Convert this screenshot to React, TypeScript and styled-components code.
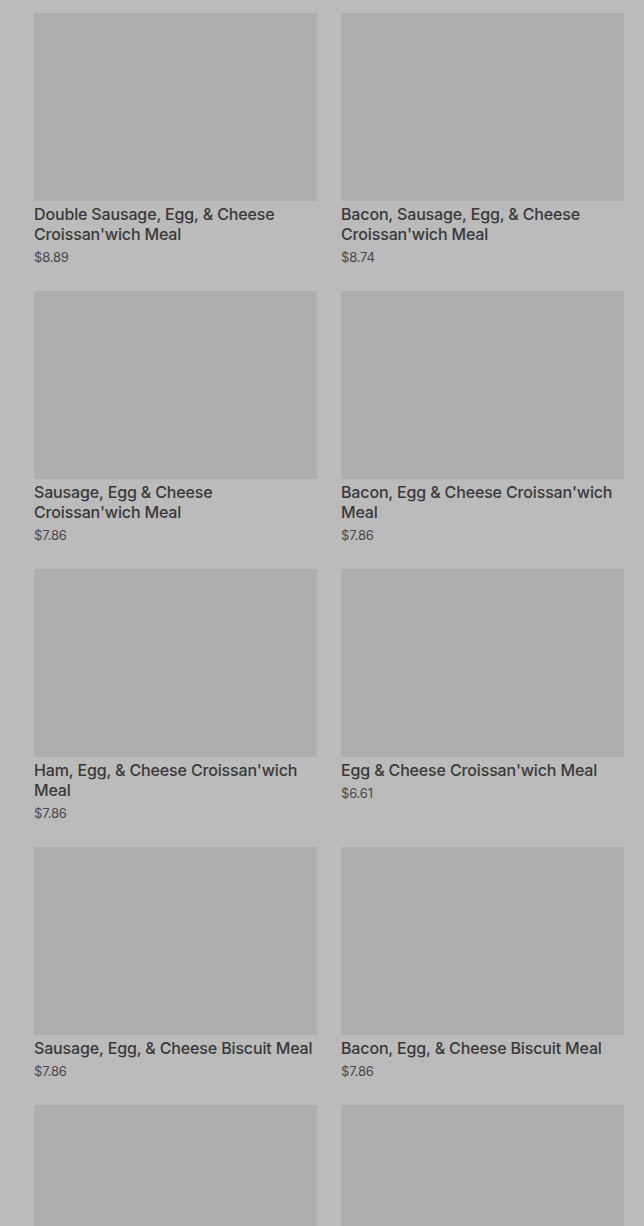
import React from 'react'
import styled, { createGlobalStyle } from 'styled-components'

const GlobalStyle = createGlobalStyle`
  html, body {
    margin: 0;
    padding: 0;
    background: #bbbbbb;
  }
  body {
    font-family: Inter, Roboto, 'Liberation Sans', sans-serif;
  }
`

type Item = {
  name: string
  price: string
}

const items: Item[] = [
  { name: "Double Sausage, Egg, & Cheese Croissan'wich Meal", price: '$8.89' },
  { name: "Bacon, Sausage, Egg, & Cheese Croissan'wich Meal", price: '$8.74' },
  { name: "Sausage, Egg & Cheese Croissan'wich Meal", price: '$7.86' },
  { name: "Bacon, Egg & Cheese Croissan'wich Meal", price: '$7.86' },
  { name: "Ham, Egg, & Cheese Croissan'wich Meal", price: '$7.86' },
  { name: "Egg & Cheese Croissan'wich Meal", price: '$6.61' },
  { name: 'Sausage, Egg, & Cheese Biscuit Meal', price: '$7.86' },
  { name: 'Bacon, Egg, & Cheese Biscuit Meal', price: '$7.86' },
  { name: '', price: '' },
  { name: '', price: '' }
]

const Page = styled.div`
  height: 1226px;
  overflow: hidden;
  background: #bbbbbb;
  padding: 13px 20px 0 34px;
  box-sizing: border-box;
`

const Grid = styled.div`
  display: grid;
  grid-template-columns: 283px 283px;
  column-gap: 24px;
  row-gap: 25px;
`

const Card = styled.div`
  display: flex;
  flex-direction: column;
`

const Thumb = styled.div`
  height: 188px;
  background: #aeaeae;
`

const Title = styled.div`
  margin-top: 3px;
  font-size: 16px;
  line-height: 20px;
  font-weight: 500;
  letter-spacing: -0.15px;
  color: #393939;
`

const Price = styled.div`
  margin-top: 4px;
  font-size: 13px;
  line-height: 18px;
  letter-spacing: -0.2px;
  color: #484848;
`

const App: React.FC = () => (
  <Page>
    <GlobalStyle />
    <Grid>
      {items.map((item, i) => (
        <Card key={i}>
          <Thumb />
          {item.name && <Title>{item.name}</Title>}
          {item.price && <Price>{item.price}</Price>}
        </Card>
      ))}
    </Grid>
  </Page>
)

export default App
